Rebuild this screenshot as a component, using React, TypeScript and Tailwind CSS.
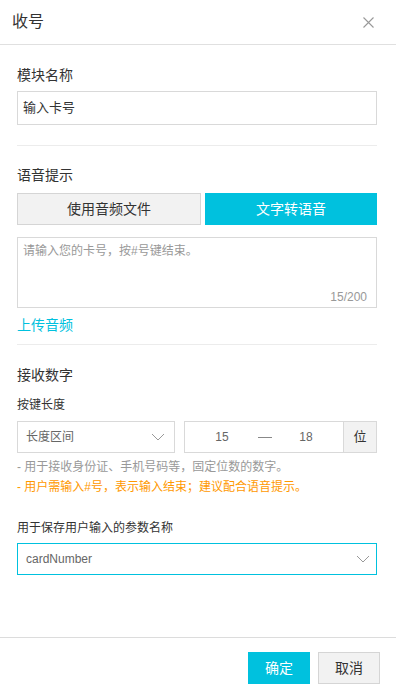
import React from 'react';

const font = { fontFamily: '"Liberation Sans", "Noto Sans CJK SC", sans-serif' };

function Chevron() {
  return (
    <svg width="14" height="8" viewBox="0 0 14 8" fill="none">
      <path d="M1 1l6 6 6-6" stroke="#999" strokeWidth="1" />
    </svg>
  );
}

export default function App() {
  return (
    <div className="w-[396px] h-[696px] bg-white flex flex-col text-[#333]" style={font}>
      {/* header */}
      <div className="h-[45px] flex items-center justify-between pl-[12px] pr-[22px] border-b border-[#e0e0e0]">
        <span className="text-[16px] text-[#333]">收号</span>
        <svg width="11" height="11" viewBox="0 0 11 11">
          <path d="M0.5 0.5l10 10M10.5 0.5l-10 10" stroke="#999" strokeWidth="1.1" />
        </svg>
      </div>

      {/* body */}
      <div className="flex-1 pl-[17px] pr-[19px] pt-[20px]">
        <div className="text-[14px] leading-[20px]">模块名称</div>
        <div className="mt-[6px] h-[34px] border border-[#d9d9d9] flex items-center px-[5px] text-[13px] text-[#333]">
          输入卡号
        </div>
        <div className="mt-[20px] border-t border-[#ececec]" />

        <div className="mt-[19px] text-[14px] leading-[20px]">语音提示</div>
        <div className="mt-[8px] flex gap-[4px]">
          <div className="w-[184px] h-[32px] bg-[#f2f2f2] border border-[#d5d5d5] flex items-center justify-center text-[14px] text-[#333]">
            使用音频文件
          </div>
          <div className="flex-1 h-[32px] bg-[#00c1de] flex items-center justify-center text-[14px] text-white">
            文字转语音
          </div>
        </div>
        <div className="mt-[12px] h-[71px] border border-[#d9d9d9] flex flex-col justify-between px-[5px] pt-[4px] pb-[1px]">
          <div className="text-[12px] leading-[18px] text-[#999]">请输入您的卡号，按#号键结束。</div>
          <div className="text-[12px] leading-[18px] text-[#999] text-right pr-[4px]">15/200</div>
        </div>
        <div className="mt-[7px] text-[14px] leading-[20px] text-[#00c1de]">上传音频</div>
        <div className="mt-[9px] border-t border-[#ececec]" />

        <div className="mt-[20px] text-[14px] leading-[20px]">接收数字</div>
        <div className="mt-[12px] text-[12px] leading-[16px]">按键长度</div>
        <div className="mt-[8px] flex gap-[9px]">
          <div className="w-[158px] h-[32px] border border-[#d9d9d9] flex items-center justify-between pl-[8px] pr-[9px] text-[12px] text-[#666]">
            <span>长度区间</span>
            <Chevron />
          </div>
          <div className="flex-1 h-[32px] border border-[#d9d9d9] flex">
            <div className="flex-1 flex items-center pl-[7px] text-[12px] text-[#666]">
              <span className="w-[60px] text-center">15</span>
              <span className="w-[14px] h-px bg-[#888] ml-[6px]" />
              <span className="w-[40px] text-center ml-[14px]">18</span>
            </div>
            <div className="w-[33px] border-l border-[#d9d9d9] bg-[#f2f2f2] flex items-center justify-center text-[13px] text-[#333]">
              位
            </div>
          </div>
        </div>
        <div className="mt-[4px] text-[12px] leading-[20px] text-[#999]">- 用于接收身份证、手机号码等，固定位数的数字。</div>
        <div className="text-[12px] leading-[20px] text-[#ff9900]">- 用户需输入#号，表示输入结束；建议配合语音提示。</div>

        <div className="mt-[23px] text-[12px] leading-[16px]">用于保存用户输入的参数名称</div>
        <div className="mt-[7px] h-[32px] border border-[#00c1de] flex items-center justify-between pl-[8px] pr-[6px] text-[12px] text-[#666]">
          <span>cardNumber</span>
          <Chevron />
        </div>
      </div>

      {/* footer */}
      <div className="border-t border-[#dcdcdc] flex justify-end gap-[8px] pt-[14px] pb-[12px] pr-[16px]">
        <button className="w-[62px] h-[32px] bg-[#00c1de] text-white text-[14px]">确定</button>
        <button className="w-[62px] h-[32px] bg-[#f2f2f2] border border-[#d5d5d5] text-[#333] text-[14px]">取消</button>
      </div>
    </div>
  );
}
